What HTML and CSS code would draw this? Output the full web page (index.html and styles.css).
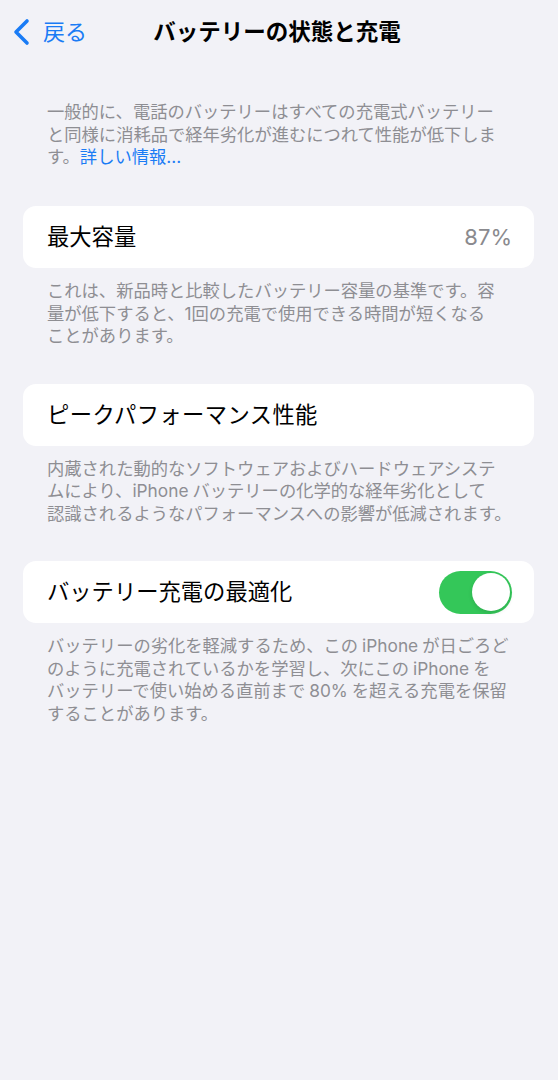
FILE: index.html
```html
<!DOCTYPE html>
<html lang="ja">
<head>
<meta charset="utf-8">
<link rel="stylesheet" href="styles.css">
</head>
<body>
<div class="page">
  <header class="nav">
    <div class="back">
      <svg class="chev" width="18" height="28" viewBox="0 0 18 28"><polyline points="15,3 4,14 15,25" fill="none" stroke="#1a7cf5" stroke-width="3.6" stroke-linecap="round" stroke-linejoin="round"/></svg>
      <span class="back-text">戻る</span>
    </div>
    <div class="title">バッテリーの状態と充電</div>
    <div></div>
  </header>

  <p class="note intro">一般的に、電話のバッテリーはすべての充電式バッテリー<br>と同様に消耗品で経年劣化が進むにつれて性能が低下しま<br>す。<span class="link">詳しい情報...</span></p>

  <div class="card">
    <span class="label">最大容量</span>
    <span class="value">87%</span>
  </div>
  <p class="note">これは、新品時と比較したバッテリー容量の基準です。容<br>量が低下すると、1回の充電で使用できる時間が短くなる<br>ことがあります。</p>

  <div class="card">
    <span class="label wide">ピークパフォーマンス性能</span>
  </div>
  <p class="note">内蔵された動的なソフトウェアおよびハードウェアシステ<br>ムにより、<span class="lat-r">iPhone</span>バッテリーの化学的な経年劣化として<br>認識されるようなパフォーマンスへの影響が低減されます。</p>

  <div class="card">
    <span class="label">バッテリー充電の最適化</span>
    <span class="toggle"><span class="knob"></span></span>
  </div>
  <p class="note">バッテリーの劣化を軽減するため、この<span class="lat">iPhone</span>が日ごろど<br>のように充電されているかを学習し、次にこの<span class="lat">iPhone</span>を<br>バッテリーで使い始める直前まで<span class="lat">80%</span>を超える充電を保留<br>することがあります。</p>
</div>
</body>
</html>
```

FILE: styles.css
```css
html, body {
  margin: 0;
  padding: 0;
  background: #f2f2f7;
}
body {
  font-family: Inter, "Noto Sans CJK JP", sans-serif;
  color: #000;
  width: 558px;
  min-height: 1080px;
}
.page {
  display: flex;
  flex-direction: column;
}
.nav {
  height: 64px;
  display: grid;
  grid-template-columns: 1fr auto 1fr;
  align-items: center;
}
.back {
  display: flex;
  align-items: center;
  padding-left: 12px;
  gap: 13px;
}
.chev {
  display: block;
}
.back-text {
  font-size: 22px;
  color: #1a7cf5;
  line-height: 28px;
}
.title {
  font-size: 22.5px;
  font-weight: 700;
  line-height: 28px;
  letter-spacing: 0;
  margin-left: -4px;
}
.note {
  margin: 12px 0 36px;
  padding: 0 10px 0 47px;
  font-size: 17.3px;
  line-height: 22.5px;
  color: #8e8e93;
  white-space: nowrap;
}
.note.intro {
  margin-top: 37px;
  margin-bottom: 37.5px;
}
.lat {
  margin: 0 4px;
}
.lat-r {
  margin-right: 4px;
}
.link {
  color: #1a7cf5;
}
.card {
  margin: 0 24px 0 23px;
  height: 62px;
  background: #fff;
  border-radius: 13px;
  display: flex;
  align-items: center;
  justify-content: space-between;
  padding: 0 22px 0 24px;
}
.label {
  font-size: 22.3px;
  line-height: 28px;
}
.label.wide {
  letter-spacing: 0.4px;
}
.value {
  font-size: 22px;
  color: #8a8a8e;
  line-height: 28px;
}
.toggle {
  width: 73px;
  height: 43px;
  border-radius: 22px;
  background: #34c759;
  display: flex;
  align-items: center;
  justify-content: flex-end;
  padding: 0 2.5px;
  box-sizing: border-box;
}
.knob {
  width: 38px;
  height: 38px;
  border-radius: 50%;
  background: #fff;
  box-shadow: 0 2px 4px rgba(0,0,0,0.12);
}
```
